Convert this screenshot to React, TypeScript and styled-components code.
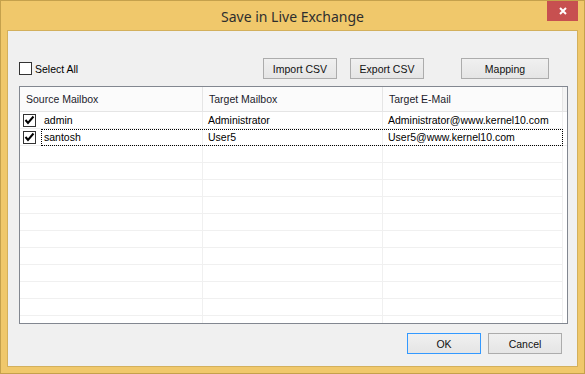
import React from 'react';
import styled, { createGlobalStyle } from 'styled-components';

const GlobalStyle = createGlobalStyle`
  html, body {
    margin: 0;
    padding: 0;
    background: #f0c86b;
  }
  body {
    font-family: 'Liberation Sans', Arial, sans-serif;
    font-size: 10.5px;
    color: #000;
  }
  * {
    box-sizing: border-box;
  }
`;

const SWindow = styled.div`
  width: 585px;
  height: 374px;
  display: flex;
  flex-direction: column;
  background: #f0c86b;
  border: 1px solid #c5a14c;
`;

const STitleBar = styled.div`
  height: 29px;
  display: grid;
  grid-template-columns: 1fr auto 1fr;
  align-items: center;
`;

const STitle = styled.div`
  grid-column: 2;
  font-family: 'Noto Sans', 'Open Sans', sans-serif;
  font-size: 14px;
  color: #2e2e2e;
  padding-top: 2px;
`;

const SClose = styled.div`
  grid-column: 3;
  justify-self: end;
  align-self: start;
  width: 31px;
  height: 20px;
  margin-right: 6px;
  background: #c75050;
  display: flex;
  align-items: center;
  justify-content: center;
`;

const SClient = styled.div`
  flex: 1;
  margin: 0 6px 6px 6px;
  border: 1px solid #d3b05c;
  background: #f0f0f0;
  padding: 27px 9px 0 11px;
  display: flex;
  flex-direction: column;
`;

const SToolbar = styled.div`
  height: 21px;
  display: flex;
  align-items: center;
  padding-right: 19px;
`;

const SSelectAll = styled.label`
  display: flex;
  align-items: center;
  gap: 3px;
  margin-right: auto;
`;

const SBox = styled.span`
  width: 13px;
  height: 13px;
  border: 1px solid #333;
  background: #fff;
  display: flex;
  align-items: center;
  justify-content: center;
`;

const SButton = styled.button<{ $width: number; $gap?: number; $focused?: boolean }>`
  width: ${(p) => p.$width}px;
  height: 21px;
  margin-left: ${(p) => p.$gap ?? 0}px;
  padding: 0;
  font-family: 'Liberation Sans', Arial, sans-serif;
  font-size: 10.5px;
  font-weight: 400;
  color: #111;
  background: linear-gradient(#f0f0f0, #e5e5e5);
  border: 1px solid ${(p) => (p.$focused ? '#3399ff' : '#acacac')};
`;

const STable = styled.div`
  margin-top: 7px;
  height: 238px;
  border: 1px solid #828790;
  background: #fff;
  overflow: hidden;
  display: flex;
  flex-direction: column;
`;

const COLS = '183px 180px 180px 1fr';

const SHeader = styled.div`
  flex: none;
  height: 25px;
  display: grid;
  grid-template-columns: ${COLS};
  border-bottom: 1px solid #e5e5e5;
  background: #fbfbfb;
`;

const SHeaderCell = styled.div`
  display: flex;
  align-items: center;
  padding-left: 6px;
  color: #1c1c2c;
  border-right: 1px solid #e5e5e5;

  &:last-child {
    border-right: none;
    background: #f4f4f4;
  }
`;

const SRow = styled.div`
  position: relative;
  flex: none;
  height: 17px;
  display: grid;
  grid-template-columns: ${COLS};
`;

const SCell = styled.div<{ $pad?: number }>`
  display: flex;
  align-items: center;
  padding-left: ${(p) => p.$pad ?? 5}px;
  border-right: 1px solid #f0f0f0;
  border-bottom: 1px solid #f0f0f0;
  white-space: nowrap;
  overflow: hidden;

  &:last-child {
    border: none;
  }
`;

const SRowCheck = styled(SBox)`
  margin-right: 8px;
`;

const SFocus = styled.span`
  position: absolute;
  left: 21px;
  top: 0;
  width: 522px;
  height: 17px;
  border: 1px dotted #000;
  pointer-events: none;
`;

const SFooter = styled.div`
  display: flex;
  justify-content: flex-end;
  gap: 7px;
  margin-top: 9px;
  padding-right: 6px;
`;

const Check: React.FC = () => (
  <svg width="11" height="11" viewBox="0 0 11 11">
    <polyline points="1.5,5 4,8 9.5,1.5" fill="none" stroke="#000" strokeWidth="2" />
  </svg>
);

interface MailRow {
  source: string;
  target: string;
  email: string;
}

const rows: MailRow[] = [
  { source: 'admin', target: 'Administrator', email: 'Administrator@www.kernel10.com' },
  { source: 'santosh', target: 'User5', email: 'User5@www.kernel10.com' },
];

export default function App() {
  const blanks = Array.from({ length: 11 });

  return (
    <>
      <GlobalStyle />
      <SWindow>
        <STitleBar>
          <STitle>Save in Live Exchange</STitle>
          <SClose>
            <svg width="8" height="8" viewBox="0 0 8 8">
              <path d="M1 1 L7 7 M7 1 L1 7" stroke="#fff" strokeWidth="2" />
            </svg>
          </SClose>
        </STitleBar>
        <SClient>
          <SToolbar>
            <SSelectAll>
              <SBox />
              Select All
            </SSelectAll>
            <SButton $width={74}>Import CSV</SButton>
            <SButton $width={74} $gap={13}>
              Export CSV
            </SButton>
            <SButton $width={88} $gap={37}>
              Mapping
            </SButton>
          </SToolbar>
          <STable>
            <SHeader>
              <SHeaderCell>Source Mailbox</SHeaderCell>
              <SHeaderCell>Target Mailbox</SHeaderCell>
              <SHeaderCell>Target E-Mail</SHeaderCell>
              <SHeaderCell />
            </SHeader>
            {rows.map((row, i) => (
              <SRow key={row.source}>
                <SCell $pad={3}>
                  <SRowCheck>
                    <Check />
                  </SRowCheck>
                  {row.source}
                </SCell>
                <SCell>{row.target}</SCell>
                <SCell>{row.email}</SCell>
                <SCell />
                {i === 1 && <SFocus />}
              </SRow>
            ))}
            {blanks.map((_, i) => (
              <SRow key={i}>
                <SCell />
                <SCell />
                <SCell />
                <SCell />
              </SRow>
            ))}
          </STable>
          <SFooter>
            <SButton $width={74} $focused>
              OK
            </SButton>
            <SButton $width={74}>Cancel</SButton>
          </SFooter>
        </SClient>
      </SWindow>
    </>
  );
}
